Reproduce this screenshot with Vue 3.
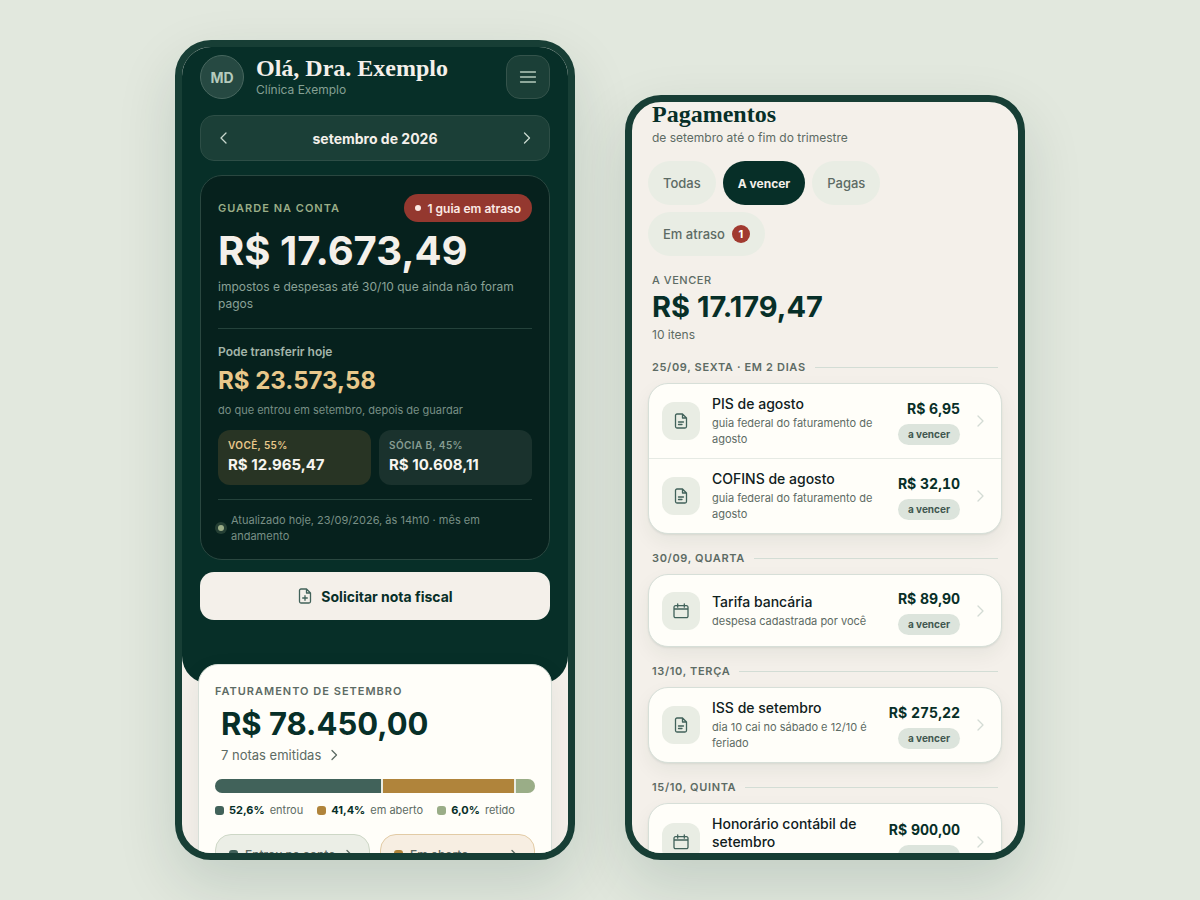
<script setup>
const shares = [
  { id: 'voce', label: 'Você, 55%', value: 'R$ 12.965,47', own: true },
  { id: 'socia', label: 'Sócia B, 45%', value: 'R$ 10.608,11', own: false },
]

const split = [
  { id: 'in', pct: 52.6, text: '52,6%', name: 'entrou' },
  { id: 'open', pct: 41.4, text: '41,4%', name: 'em aberto' },
  { id: 'held', pct: 6, text: '6,0%', name: 'retido' },
]

const filters = [
  { label: 'Todas' },
  { label: 'A vencer', active: true },
  { label: 'Pagas' },
  { label: 'Em atraso', count: 1 },
]

const groups = [
  {
    day: '25/09, sexta · em 2 dias',
    items: [
      { icon: 'doc', title: 'PIS de agosto', desc: 'guia federal do faturamento de agosto', value: 'R$ 6,95' },
      { icon: 'doc', title: 'COFINS de agosto', desc: 'guia federal do faturamento de agosto', value: 'R$ 32,10' },
    ],
  },
  {
    day: '30/09, quarta',
    items: [{ icon: 'cal', title: 'Tarifa bancária', desc: 'despesa cadastrada por você', value: 'R$ 89,90' }],
  },
  {
    day: '13/10, terça',
    items: [{ icon: 'doc', title: 'ISS de setembro', desc: 'dia 10 cai no sábado e 12/10 é feriado', value: 'R$ 275,22' }],
  },
  {
    day: '15/10, quinta',
    items: [{ icon: 'cal', title: 'Honorário contábil de setembro', desc: 'despesa cadastrada por você', value: 'R$ 900,00' }],
  },
]
</script>

<template>
  <main class="stage">
    <section class="phone" aria-label="Início">
      <div class="hero">
        <header class="top">
          <span class="avatar">MD</span>
          <div class="who">
            <h1>Olá, Dra. Exemplo</h1>
            <p>Clínica Exemplo</p>
          </div>
          <button class="menu" type="button" aria-label="Menu">
            <svg width="20" height="20" viewBox="0 0 20 20"><path d="M2.500 5h15M2.500 10h15M2.500 15h15" /></svg>
          </button>
        </header>

        <nav class="month" aria-label="Mês">
          <button type="button" aria-label="Mês anterior">
            <svg width="16" height="16" viewBox="0 0 16 16"><path d="M11 3 6 8l5 5" /></svg>
          </button>
          <strong>setembro de 2026</strong>
          <button type="button" aria-label="Próximo mês">
            <svg width="16" height="16" viewBox="0 0 16 16"><path d="m5.500 3 5 5-5 5" /></svg>
          </button>
        </nav>

        <article class="vault">
          <div class="vault-head">
            <h2>Guarde na conta</h2>
            <a class="alert" href="#atraso">1 guia em atraso</a>
          </div>
          <p class="huge">R$ 17.673,49</p>
          <p class="hint">impostos e despesas até 30/10 que ainda não foram pagos</p>
          <div class="transfer">
            <h3>Pode transferir hoje</h3>
            <p class="gold">R$ 23.573,58</p>
            <p class="note">do que entrou em setembro, depois de guardar</p>
            <div class="shares">
              <div v-for="s in shares" :key="s.id" class="share" :class="{ own: s.own }">
                <span>{{ s.label }}</span>
                <b>{{ s.value }}</b>
              </div>
            </div>
          </div>
          <p class="updated"><i></i><span>Atualizado hoje, 23/09/2026, às 14h10 · mês em andamento</span></p>
        </article>

        <button class="cta" type="button">
          <svg width="16" height="16" viewBox="0 0 16 16">
            <path d="M9.500 1H4A1.500 1.500 0 0 0 2.500 2.500v11A1.500 1.500 0 0 0 4 15h8a1.500 1.500 0 0 0 1.500-1.500V5zM9.500 1v4h4M8 7.700v4.600M5.700 10h4.600" />
          </svg>
          Solicitar nota fiscal
        </button>
      </div>

      <article class="billing">
        <h2>Faturamento de setembro</h2>
        <a class="billing-link" href="#notas">
          <b>R$ 78.450,00</b>
          <span>7 notas emitidas
            <svg width="12" height="12" viewBox="0 0 12 12"><path d="m3 1.500 4.500 4.500L3 10.500" /></svg>
          </span>
        </a>
        <div class="bar">
          <i v-for="p in split" :key="p.id" :class="p.id" :style="{ flexGrow: p.pct }"></i>
        </div>
        <ul class="legend">
          <li v-for="p in split" :key="p.id"><i :class="p.id"></i><b>{{ p.text }}</b>{{ p.name }}</li>
        </ul>
        <div class="tiles">
          <a class="tile tile-in" href="#entrou"><i class="in"></i><span>Entrou na conta</span>
            <svg width="12" height="12" viewBox="0 0 12 12"><path d="m3 1.500 4.500 4.500L3 10.500" /></svg>
          </a>
          <a class="tile tile-open" href="#aberto"><i class="open"></i><span>Em aberto</span>
            <svg width="12" height="12" viewBox="0 0 12 12"><path d="m3 1.500 4.500 4.500L3 10.500" /></svg>
          </a>
        </div>
      </article>
    </section>

    <section class="phone payments" aria-label="Pagamentos">
      <header class="pay-head">
        <h1>Pagamentos</h1>
        <p>de setembro até o fim do trimestre</p>
      </header>
      <div class="chips">
        <button v-for="f in filters" :key="f.label" type="button" class="chip" :class="{ active: f.active }">
          {{ f.label }}<em v-if="f.count">{{ f.count }}</em>
        </button>
      </div>
      <div class="total">
        <h2>A vencer</h2>
        <b>R$ 17.179,47</b>
        <span>10 itens</span>
      </div>
      <section v-for="g in groups" :key="g.day" class="group">
        <h3>{{ g.day }}</h3>
        <div class="list">
          <a v-for="it in g.items" :key="it.title" class="row" href="#item">
            <span class="ico">
              <svg v-if="it.icon === 'doc'" width="16" height="16" viewBox="0 0 16 16">
                <path d="M9.500 1H4A1.500 1.500 0 0 0 2.500 2.500v11A1.500 1.500 0 0 0 4 15h8a1.500 1.500 0 0 0 1.500-1.500V5zM9.500 1v4h4M5.500 9h5M5.500 11.500h3.500" />
              </svg>
              <svg v-else width="16" height="16" viewBox="0 0 16 16">
                <path d="M2.500 2.700h11a1.500 1.500 0 0 1 1.500 1.500v9a1.500 1.500 0 0 1-1.500 1.500h-11A1.500 1.500 0 0 1 1 13.200v-9a1.500 1.500 0 0 1 1.500-1.500zM1 6h14M4.700.8v3.400M11.300.8v3.400" />
              </svg>
            </span>
            <span class="what"><strong>{{ it.title }}</strong><small>{{ it.desc }}</small></span>
            <span class="due"><b>{{ it.value }}</b><em>a vencer</em></span>
            <svg class="go" width="16" height="16" viewBox="0 0 16 16"><path d="m6 3 5 5-5 5" /></svg>
          </a>
        </div>
      </section>
    </section>
  </main>
</template>

<style>
body {
  background: #e2e8de;
}
</style>

<style scoped>
* {
  box-sizing: border-box;
  margin: 0;
  padding: 0;
}
.stage {
  display: flex;
  justify-content: center;
  gap: 50px;
  height: 100vh;
  padding: 40px 24px;
  font-family: Inter, "Liberation Sans", sans-serif;
  color: #072f28;
  overflow: hidden;
}
button {
  font: inherit;
  border: 0;
  cursor: pointer;
}
a {
  color: inherit;
  text-decoration: none;
}
i, em {
  font-style: normal;
}
svg {
  flex: none;
  fill: none;
  stroke: currentColor;
  stroke-width: 1.3;
  stroke-linecap: round;
  stroke-linejoin: round;
}
.phone {
  flex: 0 1 400px;
  min-width: 0;
  border: 7px solid #173e35;
  border-radius: 36px;
  background: #f4f0ea;
  overflow: hidden;
  box-shadow: 0 24px 60px rgba(7, 47, 40, 0.14);
}
.payments {
  margin-top: 55px;
  padding: 0 16px;
}

/* hero */
.hero {
  padding: 8px 18px 64px;
  border-radius: 0 0 28px 28px;
  background: #072f28;
  color: #f4f0ea;
}
.top {
  display: flex;
  align-items: center;
  gap: 12px;
}
.avatar {
  display: grid;
  place-items: center;
  width: 44px;
  height: 44px;
  border: 1px solid #48675f;
  border-radius: 50%;
  background: #264942;
  color: #b5cbbd;
  font-size: 14px;
  font-weight: 700;
}
.who {
  flex: 1;
}
h1 {
  font-family: "Liberation Serif", serif;
  font-size: 24px;
  font-weight: 700;
  line-height: 24px;
}
.who p {
  margin-top: 2px;
  font-size: 12px;
  line-height: 16px;
  color: #85a094;
}
.menu {
  display: grid;
  place-items: center;
  width: 44px;
  height: 44px;
  border: 1px solid #34534b;
  border-radius: 14px;
  background: #1b3f37;
  color: #b5cbbd;
}
.month {
  display: flex;
  align-items: center;
  justify-content: space-between;
  height: 46px;
  margin-top: 16px;
  border: 1px solid #2d4e46;
  border-radius: 14px;
  background: #1b3f37;
}
.month strong {
  font-size: 14px;
  font-weight: 700;
}
.month button {
  display: grid;
  place-items: center;
  width: 44px;
  height: 44px;
  background: none;
  color: #c9d8ce;
}
.vault {
  margin-top: 14px;
  padding: 18px 17px 15px;
  border: 1px solid #2a4740;
  border-radius: 22px;
  background: #06211d;
}
.vault-head {
  display: flex;
  align-items: center;
  justify-content: space-between;
}
.vault h2 {
  font-size: 11px;
  font-weight: 600;
  letter-spacing: 1px;
  text-transform: uppercase;
  color: #9aad87;
}
.alert {
  display: flex;
  align-items: center;
  gap: 7px;
  height: 28px;
  padding: 0 11px;
  border-radius: 14px;
  background: #94382f;
  color: #fbe9e4;
  font-size: 12px;
  font-weight: 600;
}
.alert::before {
  content: "";
  width: 6px;
  height: 6px;
  border-radius: 50%;
  background: #fbe9e4;
}
.huge {
  margin-top: 6px;
  font-size: 40px;
  font-weight: 700;
  line-height: 46px;
}
.hint {
  margin-top: 4px;
  font-size: 12px;
  line-height: 17px;
  color: #8aa297;
}
.transfer {
  margin-top: 16px;
  padding-top: 14px;
  border-top: 1px solid #24423b;
}
.transfer h3 {
  font-size: 12px;
  font-weight: 600;
  line-height: 18px;
  color: #a3b5aa;
}
.gold {
  margin-top: 4px;
  font-size: 24px;
  font-weight: 700;
  line-height: 32px;
  color: #e9c88b;
}
.note {
  margin-top: 4px;
  font-size: 11px;
  line-height: 18px;
  color: #788f85;
}
.shares {
  display: grid;
  grid-template-columns: 1fr 1fr;
  gap: 8px;
  margin-top: 11px;
}
.share {
  padding: 8px 10px;
  border-radius: 12px;
  background: #1a322d;
}
.share span {
  display: block;
  font-size: 10px;
  font-weight: 600;
  line-height: 15px;
  letter-spacing: 0.04em;
  text-transform: uppercase;
  color: #879d92;
}
.share b {
  display: block;
  font-size: 15px;
  line-height: 24px;
  color: #f7f5ef;
}
.share.own {
  background: #283424;
}
.share.own span {
  color: #e9c88b;
}
.updated {
  display: flex;
  align-items: center;
  gap: 7px;
  margin-top: 14px;
  padding-top: 12px;
  border-top: 1px solid #24423b;
  font-size: 11px;
  line-height: 16px;
  color: #788f85;
}
.updated i {
  flex: none;
  width: 6px;
  height: 6px;
  border-radius: 50%;
  background: #9aad87;
  box-shadow: 0 0 0 3px #243f34;
}
.cta {
  display: flex;
  align-items: center;
  justify-content: center;
  gap: 8px;
  width: 100%;
  height: 48px;
  margin-top: 12px;
  border-radius: 14px;
  background: #f4f0ea;
  color: #072f28;
  font-size: 14px;
  font-weight: 700;
}
.cta svg {
  color: #41625a;
}

/* billing */
.billing {
  position: relative;
  margin: -20px 16px 0;
  padding: 18px 16px;
  border: 1px solid #d7dfd8;
  border-radius: 20px;
  background: #fffef9;
  box-shadow: 0 8px 24px rgba(7, 47, 40, 0.07);
}
.billing h2 {
  font-size: 11px;
  font-weight: 600;
  line-height: 16px;
  letter-spacing: 1px;
  text-transform: uppercase;
  color: #5d6b64;
}
.billing-link {
  display: block;
  margin-top: 4px;
  padding-left: 6px;
}
.billing-link b {
  display: block;
  font-size: 31px;
  line-height: 42px;
}
.billing-link span {
  display: flex;
  align-items: center;
  gap: 8px;
  margin-top: 1px;
  font-size: 13px;
  line-height: 18px;
  color: #5d6b64;
}
.bar {
  display: flex;
  gap: 2px;
  height: 14px;
  margin-top: 15px;
  border-radius: 7px;
  background: #e9ece4;
  overflow: hidden;
}
.in {
  background: #41625a;
}
.open {
  background: #b0843b;
}
.held {
  background: #9aad87;
}
.bar i {
  flex-basis: 0;
}
.legend {
  display: flex;
  gap: 14px;
  margin-top: 9px;
  list-style: none;
  font-size: 11px;
  line-height: 16px;
  color: #5d6b64;
}
.legend li {
  display: flex;
  align-items: center;
  gap: 5px;
}
.legend b {
  color: #072f28;
}
.legend i,
.tile i {
  flex: none;
  width: 9px;
  height: 9px;
  border-radius: 3px;
}
.tiles {
  display: grid;
  grid-template-columns: 1fr 1fr;
  gap: 10px;
  margin-top: 16px;
}
.tile {
  display: flex;
  align-items: flex-start;
  gap: 7px;
  height: 88px;
  padding: 12px 13px;
  border: 1px solid #cdd7c6;
  border-radius: 16px;
  background: #ebeee6;
  font-size: 12px;
  font-weight: 500;
  line-height: 16px;
  color: #5d6b64;
}
.tile span {
  flex: 1;
}
.tile i {
  margin-top: 3px;
}
.tile svg {
  margin-top: 2px;
}
.tile-open {
  border-color: #e2cba5;
  background: #f7eee2;
}

/* payments */
.pay-head {
  padding-left: 4px;
}
.pay-head p {
  margin-top: 3px;
  font-size: 12px;
  line-height: 18px;
  color: #5d6b64;
}
.chips {
  display: flex;
  flex-wrap: wrap;
  gap: 7px;
  max-width: 300px;
  margin-top: 14px;
}
.chip {
  display: flex;
  align-items: center;
  gap: 7px;
  height: 44px;
  padding: 0 15px;
  border-radius: 22px;
  background: #e9ede4;
  color: #5d6b64;
  font-size: 13px;
  font-weight: 500;
}
.chip.active {
  background: #072f28;
  color: #f4f0ea;
  font-size: 12px;
  font-weight: 700;
}
.chip em {
  display: grid;
  place-items: center;
  width: 18px;
  height: 18px;
  border-radius: 50%;
  background: #a13a30;
  color: #ffffff;
  font-size: 11px;
  font-weight: 700;
}
.total {
  display: flex;
  flex-direction: column;
  margin-top: 16px;
  padding-left: 4px;
}
.total h2 {
  font-size: 11px;
  font-weight: 500;
  line-height: 16px;
  letter-spacing: 0.05em;
  text-transform: uppercase;
  color: #5d6b64;
}
.total b {
  font-size: 29px;
  line-height: 38px;
}
.total span {
  font-size: 12px;
  line-height: 18px;
  color: #5d6b64;
}
.group {
  margin-top: 16px;
}
.total + .group {
  margin-top: 15px;
}
.group h3 {
  display: flex;
  align-items: center;
  gap: 9px;
  margin: 0 4px 8px;
  font-size: 11px;
  font-weight: 600;
  line-height: 16px;
  letter-spacing: 0.06em;
  text-transform: uppercase;
  color: #5d6b64;
}
.group h3::after {
  content: "";
  flex: 1;
  height: 1px;
  background: #d3ddd5;
}
.list {
  border: 1px solid #d7dfd8;
  border-radius: 20px;
  background: #fffef9;
  box-shadow: 0 1px 2px rgba(7, 47, 40, 0.08), 0 8px 20px rgba(7, 47, 40, 0.06);
}
.row {
  display: flex;
  align-items: center;
  gap: 12px;
  min-height: 71px;
  padding: 11px 13px;
}
.row + .row {
  border-top: 1px solid #e6eae4;
}
.ico {
  display: grid;
  place-items: center;
  flex: none;
  width: 38px;
  height: 38px;
  border-radius: 12px;
  background: #e9ede4;
  color: #41625a;
}
.what {
  flex: 1;
  min-width: 0;
}
.what strong {
  display: block;
  font-size: 14px;
  font-weight: 500;
  line-height: 18px;
  color: #10211d;
}
.what small {
  display: block;
  margin-top: 2px;
  font-size: 11px;
  line-height: 16px;
  color: #5d6b64;
}
.due {
  display: flex;
  flex-direction: column;
  align-items: flex-end;
  gap: 5px;
  padding-top: 2px;
}
.due b {
  font-size: 14px;
  line-height: 20px;
  font-variant-numeric: tabular-nums;
}
.due em {
  height: 21px;
  padding: 0 10px;
  border-radius: 11px;
  background: #dce4dc;
  color: #41574f;
  font-size: 10px;
  font-weight: 700;
  line-height: 21px;
}
.go {
  color: #d3dbd4;
}
</style>
